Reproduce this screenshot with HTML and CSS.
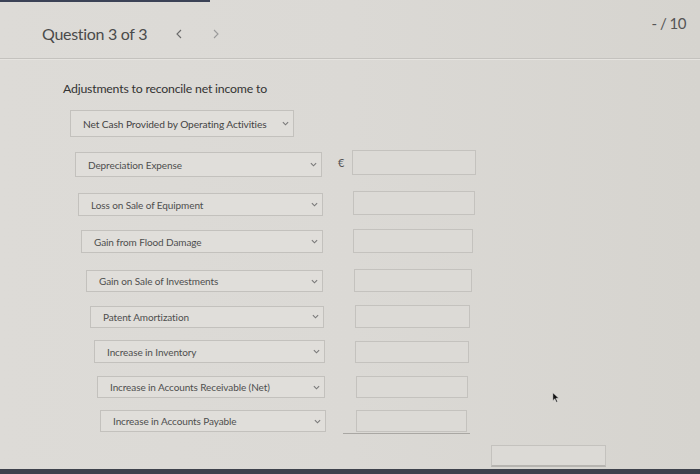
FILE: index.html
```html
<!DOCTYPE html>
<html>
<head>
<meta charset="utf-8">
<link rel="stylesheet" href="styles.css">
</head>
<body>
<div class="page">
  <div class="topbar"></div>
  <header class="header">
    <div class="qnav">
      <span class="qtitle">Question 3 of 3</span>
      <svg class="arrow prev" viewBox="0 0 6 10" width="6" height="10"><polyline points="5,1 1,5 5,9" fill="none" stroke="#6a6a6a" stroke-width="1.1"/></svg>
      <svg class="arrow next" viewBox="0 0 6 10" width="6" height="10"><polyline points="1,1 5,5 1,9" fill="none" stroke="#9a9a9a" stroke-width="1.1"/></svg>
    </div>
    <span class="score">- / 10</span>
  </header>
  <main class="content">
    <p class="label">Adjustments to reconcile net income to</p>
    <div class="select first">
      <span>Net Cash Provided by Operating Activities</span>
      <svg class="chev" viewBox="0 0 8 5" width="7" height="5"><polyline points="1,1 4,4 7,1" fill="none" stroke="#7a7a7a" stroke-width="1.3"/></svg>
    </div>
    <div class="rows">
      <div class="row"><div class="select"><span>Depreciation Expense</span><svg class="chev" viewBox="0 0 8 5" width="7" height="5"><polyline points="1,1 4,4 7,1" fill="none" stroke="#7a7a7a" stroke-width="1.3"/></svg></div><div class="cur">€</div><div class="input"></div></div>
      <div class="row"><div class="select"><span>Loss on Sale of Equipment</span><svg class="chev" viewBox="0 0 8 5" width="7" height="5"><polyline points="1,1 4,4 7,1" fill="none" stroke="#7a7a7a" stroke-width="1.3"/></svg></div><div class="cur"></div><div class="input"></div></div>
      <div class="row"><div class="select"><span>Gain from Flood Damage</span><svg class="chev" viewBox="0 0 8 5" width="7" height="5"><polyline points="1,1 4,4 7,1" fill="none" stroke="#7a7a7a" stroke-width="1.3"/></svg></div><div class="cur"></div><div class="input"></div></div>
      <div class="row"><div class="select"><span>Gain on Sale of Investments</span><svg class="chev" viewBox="0 0 8 5" width="7" height="5"><polyline points="1,1 4,4 7,1" fill="none" stroke="#7a7a7a" stroke-width="1.3"/></svg></div><div class="cur"></div><div class="input"></div></div>
      <div class="row"><div class="select"><span>Patent Amortization</span><svg class="chev" viewBox="0 0 8 5" width="7" height="5"><polyline points="1,1 4,4 7,1" fill="none" stroke="#7a7a7a" stroke-width="1.3"/></svg></div><div class="cur"></div><div class="input"></div></div>
      <div class="row"><div class="select"><span>Increase in Inventory</span><svg class="chev" viewBox="0 0 8 5" width="7" height="5"><polyline points="1,1 4,4 7,1" fill="none" stroke="#7a7a7a" stroke-width="1.3"/></svg></div><div class="cur"></div><div class="input"></div></div>
      <div class="row"><div class="select"><span>Increase in Accounts Receivable (Net)</span><svg class="chev" viewBox="0 0 8 5" width="7" height="5"><polyline points="1,1 4,4 7,1" fill="none" stroke="#7a7a7a" stroke-width="1.3"/></svg></div><div class="cur"></div><div class="input"></div></div>
      <div class="row last"><div class="select"><span>Increase in Accounts Payable</span><svg class="chev" viewBox="0 0 8 5" width="7" height="5"><polyline points="1,1 4,4 7,1" fill="none" stroke="#7a7a7a" stroke-width="1.3"/></svg></div><div class="cur"></div><div class="sum-cell"><div class="input"></div></div></div>
    </div>
    <div class="total-row"><div class="input total"></div></div>
  </main>
  <div class="bottombar"></div>
  <svg class="cursor" viewBox="0 0 10 14" width="8" height="11"><path d="M1,1 L1,11 L3.5,8.5 L5.5,13 L7,12.3 L5,8 L8.5,8 Z" fill="#111" stroke="#eee" stroke-width="0.6"/></svg>
</div>
</body>
</html>
```
FILE: styles.css
```css
html, body {
  margin: 0;
  padding: 0;
}
body {
  width: 700px;
  height: 474px;
  overflow: hidden;
  font-family: Lato, "Open Sans", "Liberation Sans", sans-serif;
  background: linear-gradient(90deg, #dddbd7 0%, #dbd9d5 50%, #d6d4cf 100%);
  color: #444;
}
.page {
  position: relative;
  height: 474px;
  display: flex;
  flex-direction: column;
}
.topbar {
  height: 2px;
  width: 210px;
  background: #3b4256;
}
.header {
  height: 56px;
  display: flex;
  justify-content: space-between;
  align-items: flex-start;
  padding: 0 14px 0 42px;
  border-bottom: 1px solid #c4c2be;
  box-shadow: 0 1px 0 #e6e4e0;
}
.qnav {
  display: flex;
  align-items: center;
  margin-top: 22px;
}
.qtitle {
  font-size: 16px;
  color: #4a4a4a;
  letter-spacing: -0.3px;
}
.arrow {
  margin-left: 29px;
  margin-top: 1px;
}
.arrow.next {
  margin-left: 31px;
}
.score {
  font-size: 15px;
  color: #555;
  margin-top: 12px;
  letter-spacing: -0.5px;
}
.content {
  padding-left: 63px;
  flex: 1;
}
.label {
  margin: 22px 0 0;
  font-size: 12.3px;
  color: #333;
  letter-spacing: -0.2px;
  line-height: 16px;
}
.select {
  box-sizing: border-box;
  display: flex;
  align-items: center;
  justify-content: space-between;
  border: 1px solid #c3c1bd;
  background: #e0deda;
  font-size: 10px;
  color: #4e4e4e;
  padding: 0 4px 0 12px;
  letter-spacing: -0.1px;
}
.select.first {
  margin: 13px 0 0 7px;
  width: 224px;
  height: 27px;
  font-size: 10.2px;
  color: #444;
}
.rows {
  display: flex;
  flex-direction: column;
}
.row {
  display: flex;
  align-items: center;
}
.row .select { height: 23px; }
.cur {
  font-size: 11px;
  color: #555;
  padding-left: 16px;
  box-sizing: border-box;
  margin-top: -4px;
}
.input {
  box-sizing: border-box;
  height: 24px;
  border: 1px solid #c4c2be;
  background: #dcdad6;
}
.row:nth-child(1) { margin-top: 15px; }
.row:nth-child(1) .select { margin-left: 12px; width: 247px; height: 25px; }
.row:nth-child(1) .cur { width: 30px; }
.row:nth-child(1) .input { width: 124px; height: 25px; margin-top: -4px; }
.row:nth-child(2) { margin-top: 16px; }
.row:nth-child(2) .select { margin-left: 15px; width: 245px; }
.row:nth-child(2) .cur { width: 30px; }
.row:nth-child(2) .input { width: 122px; margin-top: -4px; }
.row:nth-child(3) { margin-top: 14px; }
.row:nth-child(3) .select { margin-left: 18px; width: 242px; }
.row:nth-child(3) .cur { width: 30px; }
.row:nth-child(3) .input { width: 120px; margin-top: -2px; }
.row:nth-child(4) { margin-top: 17px; }
.row:nth-child(4) .select { margin-left: 23px; width: 237px; height: 22px; }
.row:nth-child(4) .cur { width: 31px; }
.row:nth-child(4) .input { width: 118px; height: 23px; margin-top: -2px; }
.row:nth-child(5) { margin-top: 13px; }
.row:nth-child(5) .select { margin-left: 27px; width: 234px; height: 22px; }
.row:nth-child(5) .cur { width: 31px; }
.row:nth-child(5) .input { width: 115px; height: 23px; }
.row:nth-child(6) { margin-top: 12px; }
.row:nth-child(6) .select { margin-left: 31px; width: 231px; }
.row:nth-child(6) .cur { width: 30px; }
.row:nth-child(6) .input { width: 114px; height: 22px; }
.row:nth-child(7) { margin-top: 13px; }
.row:nth-child(7) .select { margin-left: 34px; width: 228px; height: 22px; }
.row:nth-child(7) .cur { width: 31px; }
.row:nth-child(7) .input { width: 112px; height: 22px; }
.row:nth-child(8) { margin-top: 12px; }
.row:nth-child(8) .select { margin-left: 37px; width: 226px; height: 22px; }
.row:nth-child(8) .cur { width: 17px; }
.sum-cell {
  padding: 0 3px 1px 13px;
  border-bottom: 1px solid #a9a7a3;
  margin-bottom: -2px;
}
.row:nth-child(8) .input { width: 111px; height: 22px; }
.total-row {
  display: flex;
  padding-left: 428px;
  margin-top: 13px;
}
.input.total {
  width: 115px;
  height: 22px;
  border-bottom: 2px solid #b6b4b0;
}
.bottombar {
  height: 5px;
  background: #3e424c;
}
.cursor {
  position: absolute;
  left: 552px;
  top: 392px;
}
```
